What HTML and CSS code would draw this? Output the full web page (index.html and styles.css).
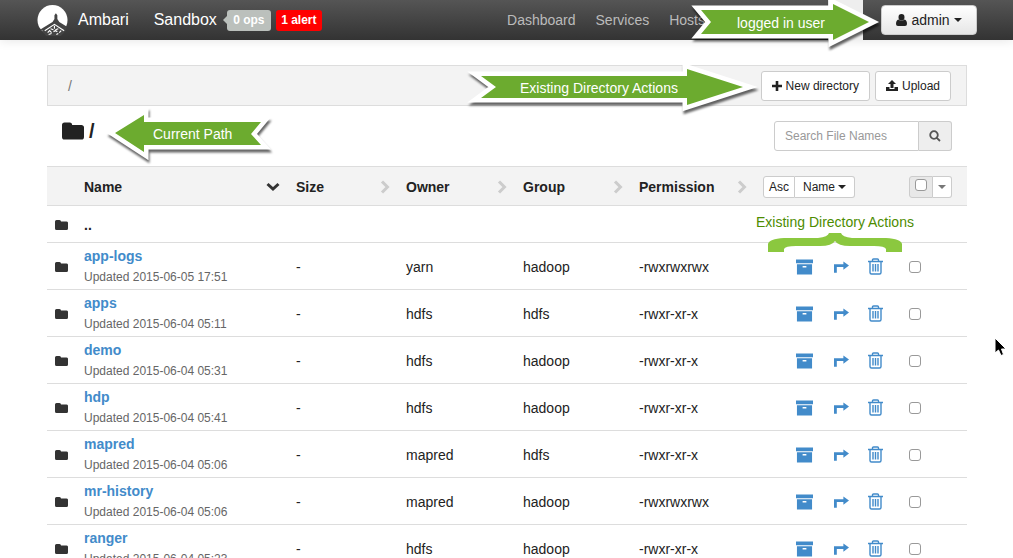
FILE: index.html
```
<!DOCTYPE html>
<html lang="en">

<head>
    <meta charset="UTF-8">
    <meta name="viewport" content="width=device-width, initial-scale=1.0">
    <title>Ambari - Files</title>
    <link rel="stylesheet" href="styles.css">
</head>

<body>
    <!-- Icon set -->
    <svg class="icon-set" aria-hidden="true">
        <symbol id="i-folder" viewBox="0 0 26 22">
            <path d="M0 4a3 3 0 0 1 3-3h6a3 3 0 0 1 3 3h10a3 3 0 0 1 4 3v11a3 3 0 0 1-3 3H3a3 3 0 0 1-3-3z" />
        </symbol>
        <symbol id="i-archive" viewBox="0 0 18 16">
            <path d="M0 0h18v4H0zM1 5h16v11H1zM7 7v1.5h4V7z" fill-rule="evenodd" />
        </symbol>
        <symbol id="i-move" viewBox="0 0 16 12">
            <path d="M0 12V3h10V0l6 4.5L10 9V6H3v6z" />
        </symbol>
        <symbol id="i-trash" viewBox="0 0 15 17">
            <path d="M0 3.5h15M2 4v10.5Q2 16 3.500 16h8q1.500 0 1.500-1.500V4M4.500 3.500V2Q4.500 1 5.500 1h4q1 0 1 1v1.500M5 6v7.500M7.500 6v7.500M10 6v7.500" fill="none" stroke="currentColor" stroke-width="1.4" />
        </symbol>
        <symbol id="i-down" viewBox="0 0 14 10">
            <path d="M1.500 2l5.500 5 5.500-5" fill="none" stroke="currentColor" stroke-width="3" />
        </symbol>
        <symbol id="i-right" viewBox="0 0 10 14">
            <path d="M2 1.500L7.500 7 2 12.500" fill="none" stroke="currentColor" stroke-width="3" />
        </symbol>
        <symbol id="i-caret" viewBox="0 0 8 4">
            <path d="M0 0h8L4 4z" />
        </symbol>
        <symbol id="i-user" viewBox="0 0 11 12">
            <path d="M5.500 0a3 3.200 0 1 1 0 6.400a3 3.200 0 0 1 0-6.400M2.500 5.500Q5.500 8 8.500 5.500Q11 6 11 10q0 2-2 2H2q-2 0-2-2Q0 6 2.500 5.500" />
        </symbol>
        <symbol id="i-plus" viewBox="0 0 10 10">
            <path d="M3.700 0h2.600v3.700H10v2.600H6.300V10H3.700V6.300H0V3.700h3.700z" />
        </symbol>
        <symbol id="i-upload" viewBox="0 0 12 11">
            <path d="M6 0l4 4H7.500v4h-3V4H2zM0 7h3.500v2h5V7H12v4H0z" />
        </symbol>
        <symbol id="i-search" viewBox="0 0 12 12">
            <path d="M5 1.200a3.800 3.800 0 1 1 0 7.600a3.800 3.800 0 0 1 0-7.600M7.800 7.800l3.200 3.200" fill="none" stroke="currentColor" stroke-width="1.8" />
        </symbol>
    </svg>

    <header class="topbar">
        <a class="brand" href="#">
            <svg class="logo" viewBox="0 0 32 32" aria-hidden="true">
                <circle cx="16" cy="16" r="15.500" fill="#fff" />
                <path d="M19.500 4v5l1.500 2v4l2 3 8 5-2 4-9-6-9 6-8-1 13-8 2-3v-4l1.500-2z" fill="#444" />
                <path d="M5 27l13-8 12 8-6 6H10z" fill="#444" />
                <path d="M8 27l10-6.500L28 27M11 29l2-2 2 2M18 22v3M14 25l3 1M22 25l-3 1M17 28l2-1 2 1M23 29l2-2M12 31l3-1M20 31l2-1" fill="none" stroke="#fff" stroke-width="1.2" />
            </svg>
            Ambari
        </a>
        <a class="cluster" href="#">Sandbox</a>
        <a class="badge ops" href="#">0 ops</a>
        <a class="badge alert" href="#">1 alert</a>
        <nav class="menu">
            <a href="#">Dashboard</a>
            <a href="#">Services</a>
            <a href="#">Hosts</a>
        </nav>
        <button class="user-btn" type="button">
            <svg class="i-user"><use href="#i-user" /></svg>
            admin
            <svg class="i-caret"><use href="#i-caret" /></svg>
        </button>
    </header>

    <main>
        <div class="breadcrumb">
            <span class="crumb">/</span>
            <button class="btn" type="button"><svg class="i-plus"><use href="#i-plus" /></svg>New directory</button>
            <button class="btn" type="button"><svg class="i-upload"><use href="#i-upload" /></svg>Upload</button>
        </div>

        <div class="path-row">
            <h1><svg class="i-folder-lg"><use href="#i-folder" /></svg>/</h1>
            <form class="search">
                <input type="text" placeholder="Search File Names" aria-label="Search File Names">
                <button type="button" aria-label="Search"><svg class="i-search"><use href="#i-search" /></svg></button>
            </form>
        </div>

        <table class="files">
            <colgroup>
                <col class="c-icon">
                <col class="c-name">
                <col class="c-size">
                <col class="c-owner">
                <col class="c-group">
                <col class="c-perm">
                <col class="c-actions">
                <col class="c-check">
            </colgroup>
            <thead>
                <tr>
                    <th></th>
                    <th><div class="sort active">Name<svg class="i-down"><use href="#i-down" /></svg></div></th>
                    <th><div class="sort">Size<svg class="i-right"><use href="#i-right" /></svg></div></th>
                    <th><div class="sort">Owner<svg class="i-right"><use href="#i-right" /></svg></div></th>
                    <th><div class="sort">Group<svg class="i-right"><use href="#i-right" /></svg></div></th>
                    <th><div class="sort">Permission<svg class="i-right"><use href="#i-right" /></svg></div></th>
                    <th>
                        <div class="group">
                            <button type="button">Asc</button>
                            <button class="by" type="button">Name<svg class="i-caret"><use href="#i-caret" /></svg></button>
                        </div>
                    </th>
                    <th>
                        <div class="group select-all">
                            <label><input type="checkbox" aria-label="Select all"></label>
                            <button type="button" aria-label="Selection actions"><svg class="i-caret"><use href="#i-caret" /></svg></button>
                        </div>
                    </th>
                </tr>
            </thead>
            <tbody id="file-rows">
                <tr class="parent">
                    <td><svg class="i-folder"><use href="#i-folder" /></svg></td>
                    <td colspan="7"><strong>..</strong></td>
                </tr>
            </tbody>
        </table>
    </main>

    <!-- Callouts drawn over the page -->
    <div class="callout user-callout">
        <svg viewBox="0 0 200 60">
            <path class="patch" d="M142 0h35v40h-35z" />
            <path class="arrow" d="M15 10h132V4l36 18-36 18v-6H15l10-12z" />
        </svg>
        <span>logged in user</span>
    </div>
    <div class="callout actions-callout">
        <svg viewBox="0 0 300 60">
            <path class="arrow" d="M19 19h206v-7l56 18-56 18v-7H19l15-11z" />
        </svg>
        <span>Existing Directory Actions</span>
    </div>
    <div class="callout path-callout">
        <svg viewBox="0 0 180 60">
            <path class="arrow" d="M11 28l29-18v7h117l-10 12 10 11H40v7z" />
        </svg>
        <span>Current Path</span>
    </div>
    <div class="row-callout">
        <span>Existing Directory Actions</span>
        <svg viewBox="0 0 134 20">
            <path d="M0 19V11Q1 6 16 5H50Q60 4 61 0H73Q74 4 84 5H118Q133 6 134 11V19H118V16Q117 13 106 13H82Q70 13 67 8Q64 13 52 13H28Q17 13 16 16V19z" />
        </svg>
    </div>
    <svg class="cursor" viewBox="0 0 14 20" aria-hidden="true">
        <path d="M1 1v15l3.500-3L7 18.500l2.500-1L7.500 12H12z" fill="#000" stroke="#fff" stroke-width="1" />
    </svg>

    <script>
        const files = [
            ['app-logs', '2015-06-05 17:51', 'yarn', 'hadoop', '-rwxrwxrwx'],
            ['apps', '2015-06-04 05:11', 'hdfs', 'hdfs', '-rwxr-xr-x'],
            ['demo', '2015-06-04 05:31', 'hdfs', 'hadoop', '-rwxr-xr-x'],
            ['hdp', '2015-06-04 05:41', 'hdfs', 'hadoop', '-rwxr-xr-x'],
            ['mapred', '2015-06-04 05:06', 'mapred', 'hdfs', '-rwxr-xr-x'],
            ['mr-history', '2015-06-04 05:06', 'mapred', 'hadoop', '-rwxrwxrwx'],
            ['ranger', '2015-06-04 05:23', 'hdfs', 'hadoop', '-rwxr-xr-x']
        ];

        const icon = name => `<svg class="i-${name}"><use href="#i-${name}" /></svg>`;

        document.getElementById('file-rows').innerHTML += files.map(([name, updated, owner, group, perm]) => `
            <tr>
                <td>${icon('folder')}</td>
                <td><a class="name" href="#">${name}</a><span class="updated">Updated ${updated}</span></td>
                <td>-</td>
                <td>${owner}</td>
                <td>${group}</td>
                <td>${perm}</td>
                <td>
                    <div class="actions">
                        <a href="#" aria-label="Archive ${name}">${icon('archive')}</a>
                        <a href="#" aria-label="Move ${name}">${icon('move')}</a>
                        <a href="#" aria-label="Delete ${name}">${icon('trash')}</a>
                    </div>
                </td>
                <td><input type="checkbox" aria-label="Select ${name}"></td>
            </tr>
        `).join('');
    </script>
</body>

</html>
```

FILE: styles.css
```
* {
    box-sizing: border-box;
}

body {
    font-family: "Liberation Sans", Arial, sans-serif;
    font-size: 14px;
    line-height: 20px;
    margin: 0;
    height: 100vh;
    overflow: hidden;
    position: relative;
    background: #fff;
    color: #222;
}

a {
    color: #428bca;
    text-decoration: none;
}

button,
input {
    font: inherit;
    color: inherit;
}

button {
    cursor: pointer;
}

svg {
    fill: currentColor;
    flex: none;
}

.icon-set {
    display: none;
}

/* Top bar */
.topbar {
    display: flex;
    align-items: center;
    height: 40px;
    padding: 0 36px 0 37px;
    background: linear-gradient(#555, #333);
    box-shadow: 0 1px 10px rgba(0, 0, 0, 0.1);
    font-size: 16px;
}

.topbar a {
    color: #fff;
}

.brand {
    display: flex;
    align-items: center;
    gap: 10px;
    margin-right: 25px;
}

.logo {
    width: 31px;
    height: 32px;
}

.cluster {
    margin-right: 10px;
}

.topbar .badge {
    height: 21px;
    border-radius: 3px;
    font-size: 12px;
    font-weight: bold;
    text-align: center;
}

.topbar .ops {
    position: relative;
    width: 44px;
    margin-right: 5px;
    background: #bbc0bc;
}

.ops::before {
    content: "";
    position: absolute;
    left: -4px;
    top: 6px;
    border: 4px solid transparent;
    border-left: 0;
    border-right-color: #bbc0bc;
}

.topbar .alert {
    width: 46px;
    background: #f00;
}

.menu {
    display: flex;
    gap: 20px;
    margin-left: auto;
    margin-right: 176px;
    font-size: 14px;
}

.topbar .menu a {
    color: #bbb;
}

.user-btn {
    display: flex;
    align-items: center;
    justify-content: center;
    gap: 4px;
    width: 96px;
    height: 30px;
    padding: 0;
    border: 1px solid #ccc;
    border-radius: 4px;
    background: linear-gradient(#fff, #e6e6e6);
    font-size: 14px;
}

.i-user {
    width: 11px;
    height: 12px;
}

.i-caret {
    width: 8px;
    height: 4px;
}

/* Page */
main {
    padding: 25px 46px 0 47px;
}

.breadcrumb {
    display: flex;
    align-items: center;
    gap: 5px;
    height: 41px;
    padding: 0 15px 0 20px;
    border: 1px solid #ddd;
    background: #f3f3f3;
}

.crumb {
    margin-right: auto;
    color: #777;
}

.btn {
    display: flex;
    align-items: center;
    gap: 4px;
    height: 30px;
    padding: 0 10px;
    border: 1px solid #ccc;
    border-radius: 3px;
    background: #fff;
    font-size: 12px;
}

.i-plus {
    width: 10px;
    height: 10px;
}

.i-upload {
    width: 12px;
    height: 11px;
}

.path-row {
    display: flex;
    justify-content: space-between;
    height: 60px;
    padding: 15px 15px 0;
}

h1 {
    display: flex;
    align-items: center;
    gap: 5px;
    height: 20px;
    margin: 0;
    font-size: 20px;
}

.i-folder-lg {
    width: 22px;
    height: 20px;
}

.search {
    display: flex;
    height: 30px;
}

.search input {
    width: 145px;
    padding: 0 10px;
    border: 1px solid #ccc;
    border-radius: 3px 0 0 3px;
    font-size: 12px;
}

.search input::placeholder {
    color: #999;
}

.search button {
    display: flex;
    align-items: center;
    justify-content: center;
    width: 33px;
    padding: 0;
    border: 1px solid #ccc;
    border-left: 0;
    border-radius: 0 3px 3px 0;
    background: #eee;
    color: #555;
}

.i-search {
    width: 12px;
    height: 12px;
}

/* File table */
.files {
    width: 100%;
    table-layout: fixed;
    border-spacing: 0;
}

.c-icon {
    width: 29px;
}

.c-size {
    width: 110px;
}

.c-owner {
    width: 117px;
}

.c-group {
    width: 116px;
}

.c-perm {
    width: 124px;
}

.c-actions {
    width: 146px;
}

.c-check {
    width: 66px;
}

.files th,
.files td {
    height: 47px;
    padding: 1px 8px 0;
    border-bottom: 1px solid #ddd;
    text-align: left;
    vertical-align: middle;
}

.files th {
    height: 40px;
    border-top: 1px solid #ddd;
    background: #f3f3f3;
}

.files .parent td {
    height: 37px;
}

.files svg {
    display: block;
}

.files input {
    display: block;
    width: 12px;
    height: 12px;
    margin: 0;
    border: 1px solid #999;
    border-radius: 3px;
    background: #fff;
    appearance: none;
}

.sort {
    display: flex;
    align-items: center;
    justify-content: space-between;
    padding-top: 1px;
}

.sort svg {
    color: #ccc;
}

.sort.active svg {
    color: #333;
}

.i-down {
    width: 14px;
    height: 10px;
}

.i-right {
    width: 10px;
    height: 14px;
}

.group {
    display: flex;
    height: 22px;
    font-size: 12px;
    font-weight: normal;
}

.group button,
.group label {
    display: flex;
    align-items: center;
    justify-content: center;
    gap: 3px;
    width: 32px;
    padding: 0;
    border: 1px solid #ccc;
    border-radius: 3px 0 0 3px;
    background: #fff;
}

.group .by {
    width: 60px;
}

.group button:last-child {
    border-left: 0;
    border-radius: 0 3px 3px 0;
}

.select-all label {
    width: 24px;
    padding-bottom: 4px;
    background: #e8e8e8;
}

.select-all button {
    width: 19px;
    color: #777;
}

.i-folder {
    width: 13px;
    height: 12px;
    color: #333;
}

.name,
.updated {
    display: block;
}

.name {
    font-weight: bold;
}

.updated {
    padding-top: 1px;
    color: #666;
    font-size: 12px;
}

.actions {
    display: flex;
    align-items: center;
    padding-left: 33px;
}

.actions a:nth-child(2) {
    margin: 0 19px 0 21px;
}

.i-archive {
    width: 17px;
    height: 16px;
}

.i-move {
    width: 15px;
    height: 12px;
}

.i-trash {
    width: 15px;
    height: 17px;
}

/* Callouts */
.callout {
    position: absolute;
    color: #fff;
}

.callout svg {
    display: block;
    width: 100%;
    height: 60px;
    overflow: visible;
}

.callout span {
    position: absolute;
    white-space: nowrap;
}

.arrow {
    fill: #6cab2f;
    stroke: #fff;
    stroke-width: 9px;
    paint-order: stroke;
    filter: drop-shadow(1px 3px 1px rgba(0, 0, 0, 0.6));
}

.patch {
    fill: #eee;
}

.user-callout {
    top: 0;
    right: 127px;
    width: 200px;
}

.user-callout span {
    top: 13px;
    left: 51px;
}

.actions-callout {
    top: 57px;
    right: 251px;
    width: 300px;
}

.actions-callout span {
    top: 21px;
    left: 58px;
}

.path-callout {
    top: 105px;
    left: 104px;
    width: 180px;
}

.path-callout span {
    top: 19px;
    left: 49px;
}

.row-callout {
    position: absolute;
    top: 212px;
    right: 99px;
    width: 158px;
    color: #4d8c00;
    white-space: nowrap;
}

.row-callout svg {
    display: block;
    width: 134px;
    height: 20px;
    margin: 1px 0 0 12px;
    fill: #8bc83f;
}

.cursor {
    position: absolute;
    top: 337px;
    right: 5px;
    width: 14px;
    height: 20px;
}
```
